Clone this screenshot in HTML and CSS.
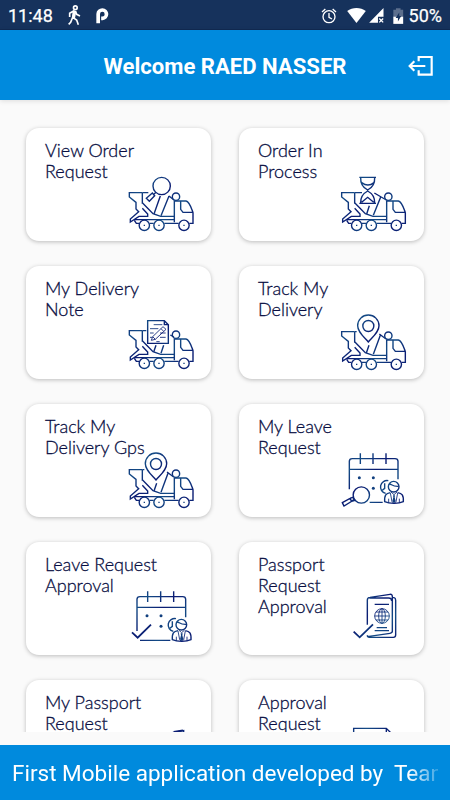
FILE: index.html
```html
<!DOCTYPE html>
<html lang="en">
<head>
    <meta charset="UTF-8">
    <meta name="viewport" content="width=device-width, initial-scale=1.0">
    <title>Welcome</title>
    <link rel="stylesheet" href="styles.css">
</head>
<body>
    <!-- Shared icon parts -->
    <svg class="defs" width="0" height="0">
        <defs>
            <linearGradient id="ink" gradientUnits="userSpaceOnUse" x1="340" y1="180" x2="380" y2="220" spreadMethod="reflect">
                <stop offset="0" stop-color="#0a1a72"/>
                <stop offset="1" stop-color="#134b85"/>
            </linearGradient>
            <g id="truck">
                <path d="M382 233V266M382 280L398 297V304H372L346 321V312L371 290L363 282V262L343 246V233H382M382 263L414 296L437 304H478"/>
                <path d="M478 322V258H513C524 260 529 280 534 293V325H523M497 259V283L504 292H533"/>
                <path d="M358 314H478M358 316L364 325H372M404 325H416M448 325H491"/>
                <circle cx="483" cy="245" r="11"/>
                <circle cx="388" cy="331" r="15.5"/>
                <circle cx="432" cy="331" r="15.5"/>
                <circle cx="507" cy="331" r="15.5"/>
                <path class="dot" d="M386 329h4v4h-4zM430 329h4v4h-4zM505 329h4v4h-4z"/>
            </g>
            <g id="pin">
                <path d="M423 264C407 246 391 233 391 215A32 32 0 0 1 455 215C455 233 439 246 423 264Z"/>
                <circle cx="423" cy="216" r="16.5"/>
                <path d="M425 274L417 297M459 244L438 301M456 240L476 255M382 233H388"/>
            </g>
            <g id="person">
                <path d="M481 269A19 19 0 1 0 473 307M470 277V292L463 298"/>
                <circle cx="497" cy="287" r="16"/>
                <path d="M483 279C491 278 491 287 512 286M487 305C474 307 469 312 470 332C484 339 512 339 526 332C527 312 522 307 509 305"/>
                <path class="thin" d="M489 303L498 311L507 303M482 323V336M514 323V336M487 306L492 332L498 338L504 332L509 306"/>
                <path class="dot" d="M495 313h6l-1 6 3 12-5 6-5-6 3-12z"/>
            </g>
        </defs>
    </svg>

    <div class="status-bar">
        <span class="clock">11:48</span>
        <svg class="walk" viewBox="0 0 39 60">
            <circle cx="22" cy="5" r="5.5"/>
            <path d="M5 33V22L17 15L23 17L26 25L36 30M17 16L14 34L8 49L2 55M14 34L26 42L31 56"/>
            <path d="M18 17L22 19L19 34L15 34Z"/>
        </svg>
        <svg class="parking" viewBox="0 0 38 48">
            <path d="M6 46V18A12.500 12.500 0 1 1 19 31H15"/>
        </svg>
        <div class="status-icons">
            <svg class="alarm" viewBox="0 0 48 48">
                <circle cx="24" cy="26" r="18"/>
                <path d="M24 15V28L33 33M3 12L13 3M35 3L45 12"/>
            </svg>
            <svg class="wifi" viewBox="0 0 57 46">
                <path d="M0 9C16-3 41-3 57 9L28.500 46Z"/>
            </svg>
            <svg class="signal" viewBox="0 0 45 46">
                <path d="M44 0V27H27V45H0Z"/>
                <path class="cross" d="M31 32L43 44M43 32L31 44"/>
            </svg>
            <svg class="battery" viewBox="0 0 32 48">
                <path class="empty" d="M1 5H9V0H23V5H31V26H1Z"/>
                <path d="M1 26H31V48H1Z"/>
                <path class="bolt" d="M19 13L8 30H15V41L25 24H19Z"/>
            </svg>
            <span class="percent">50%</span>
        </div>
    </div>

    <div class="header">
        <h1>Welcome RAED NASSER</h1>
        <svg class="logout" viewBox="0 0 75 60">
            <path d="M32 16V3H71V56H32V43M52 30H6M19 16L5 30L19 44"/>
        </svg>
    </div>

    <div class="menu">
        <div class="card">
            <p>View Order<br>Request</p>
            <svg class="icon" viewBox="333 171 216 198">
                <use href="#truck"/>
                <path d="M382 233H400M436 243L417 297M462 243L438 302M462 243L477 255"/>
                <circle cx="440" cy="213" r="26"/>
                <path d="M423 232L415 239M412 234L394 250L403 259L419 242Z"/>
            </svg>
        </div>
        <div class="card">
            <p>Order In<br>Process</p>
            <svg class="icon" viewBox="335 171 216 198">
                <use href="#truck"/>
                <path d="M382 233H404M426 272L418 297M461 244L438 301M441 234L477 255"/>
                <path d="M396 187H446M396 265H446M400 188C399 208 408 218 421 225C434 218 443 208 442 188M400 264C399 244 408 235 421 228C434 235 443 244 442 264M403 203C415 212 429 212 440 203M403 262L421 247L439 262"/>
            </svg>
        </div>
        <div class="card">
            <p>My Delivery<br>Note</p>
            <svg class="icon" viewBox="333 171 216 198">
                <use href="#truck"/>
                <path d="M382 233H394M423 277L416 297M446 277L438 301M466 246L477 252"/>
                <path d="M398 203H448L460 215V271H398ZM448 203V215H460"/>
                <path class="thin" d="M416 215H442M405 227H430M405 240H416M405 253H411M435 253H452M435 240H452M424 266H434M444 221L453 229L421 259L409 262L413 251ZM438 227L446 235M413 251L421 259"/>
            </svg>
        </div>
        <div class="card">
            <p>Track My<br>Delivery</p>
            <svg class="icon" viewBox="335 168 216 198">
                <use href="#truck"/>
                <use href="#pin"/>
            </svg>
        </div>
        <div class="card">
            <p>Track My<br>Delivery Gps</p>
            <svg class="icon" viewBox="333 168 216 198">
                <use href="#truck"/>
                <use href="#pin"/>
            </svg>
        </div>
        <div class="card">
            <p>My Leave<br>Request</p>
            <svg class="icon" viewBox="333 171 216 198">
                <path d="M364 295V211Q364 203 373 203H501Q510 203 510 211V265M364 235H510M425 334H464"/>
                <path d="M397 187V219M435 187V219M474 187V219"/>
                <circle class="dot" cx="394" cy="260" r="4.5"/>
                <circle class="dot" cx="436" cy="260" r="4.5"/>
                <circle class="dot" cx="436" cy="292" r="4.5"/>
                <circle cx="400" cy="312" r="24.500"/>
                <path d="M379 325L370 331M343 335L366 322L371 331L348 345ZM366 322L374 319L381 328L371 331"/>
                <use href="#person"/>
            </svg>
        </div>
        <div class="card">
            <p>Leave Request<br>Approval</p>
            <svg class="icon" viewBox="331 171 216 198">
                <path d="M364 306V211Q364 203 373 203H501Q510 203 510 211V265M364 235H510M373 334H464"/>
                <path d="M396 187V219M435 187V219M474 187V219"/>
                <circle class="dot" cx="394" cy="260" r="4.5"/>
                <circle class="dot" cx="436" cy="260" r="4.5"/>
                <circle class="dot" cx="436" cy="292" r="4.5"/>
                <path class="thick" d="M349 310L366 326L406 287"/>
                <use href="#person"/>
            </svg>
        </div>
        <div class="card">
            <p>Passport<br>Request<br>Approval</p>
            <svg class="icon" viewBox="333 171 216 198">
                <path d="M418 287V213Q418 206 426 205L486 196Q493 195 493 203V307Q493 312 486 313L418 323M424 207H482Q491 207 491 216M493 206H498Q503 207 503 214V318Q503 325 496 325H424Q418 325 418 319"/>
                <path d="M440 226H483M440 305H483M446 296H477"/>
                <circle class="thin" cx="462" cy="261" r="22"/>
                <ellipse class="thin" cx="462" cy="261" rx="10" ry="22"/>
                <path class="thin" d="M462 239V283M440 261H484M444 249H480M444 273H480"/>
                <path class="thick" d="M377 308L395 325L435 286"/>
            </svg>
        </div>
        <div class="card">
            <p>My Passport<br>Request</p>
            <svg class="icon" viewBox="335 171 216 198">
                <path class="thick" d="M478 195L506 190"/>
                <path d="M440 203V322H508V191L440 203"/>
            </svg>
        </div>
        <div class="card">
            <p>Approval<br>Request</p>
            <svg class="icon" viewBox="333 171 216 198">
                <path d="M377 330V184H475L503 212V330ZM475 184V212H503"/>
            </svg>
        </div>
    </div>

    <div class="footer">
        <div class="marquee">First Mobile application developed by&nbsp; Team</div>
    </div>
</body>
</html>
```
FILE: styles.css
```css
* {
    box-sizing: border-box;
}

body {
    font-family: Roboto, "Liberation Sans", sans-serif;
    background-color: #fafafa;
    margin: 0;
    height: 800px;
    display: flex;
    flex-direction: column;
    overflow: hidden;
}

svg {
    flex-shrink: 0;
    overflow: visible;
}

/* only holds definitions, kept out of the column */
.defs {
    position: absolute;
}

.status-bar {
    height: 30px;
    flex-shrink: 0;
    background: #16325c;
    border-bottom: 1px solid #112a52;
    color: #fff;
    display: flex;
    align-items: center;
    padding: 2px 8px 0;
    font-size: 18px;
    font-weight: 400;
    -webkit-text-stroke: 0.25px #fff;
}

.status-bar svg {
    fill: #fff;
}

.clock {
    width: 60px;
}

.status-bar .walk {
    width: 13px;
    height: 20px;
    stroke: #fff;
    stroke-width: 5;
    fill: none;
}

.status-bar .parking {
    width: 13px;
    height: 16px;
    margin-left: 15px;
    fill: none;
    stroke: #fff;
    stroke-width: 11;
}

.status-icons {
    margin-left: auto;
    display: flex;
    align-items: center;
}

.status-bar .alarm {
    width: 16px;
    height: 16px;
    fill: none;
    stroke: #fff;
    stroke-width: 4;
    margin-right: 10px;
}

.wifi {
    width: 19px;
    height: 15px;
    margin-right: 3px;
}

.signal {
    width: 15px;
    height: 15px;
    margin-right: 9px;
}

.cross {
    stroke: #fff;
    stroke-width: 4;
}

.battery {
    width: 10.5px;
    height: 16px;
    margin-right: 5px;
}

.status-bar .empty {
    fill: #5c6f8d;
}

.status-bar .bolt {
    fill: #16325c;
}

.header {
    height: 70px;
    flex-shrink: 0;
    background: #008add;
    color: #fff;
    display: grid;
    grid-template-columns: 1fr auto 1fr;
    align-items: center;
    padding: 1px 17px 0;
    box-shadow: 0 1px 5px rgba(0, 0, 0, 0.12);
}

.header h1 {
    grid-column: 2;
    margin: 0;
    font-size: 22.1px;
    font-weight: 700;
    line-height: 28px;
    white-space: nowrap;
}

.logout {
    width: 25px;
    height: 20px;
    justify-self: end;
    fill: none;
    stroke: #fff;
    stroke-width: 6.5;
}

.menu {
    height: 632px;
    flex-shrink: 0;
    overflow: hidden;
    display: grid;
    grid-template-columns: 185px 185px;
    grid-auto-rows: 113px;
    gap: 25px 28px;
    padding: 28px 26px 0;
}

.card {
    background: #fff;
    border-radius: 13px;
    box-shadow: 0 1px 4px rgba(0, 0, 0, 0.25);
    display: grid;
    padding: 12px 13px 3px 19px;
}

/* text and icon share one cell, long labels may run over the icon */
.card p,
.card .icon {
    grid-area: 1 / 1;
}

.card p {
    margin: 0;
    font-family: Lato, "Liberation Sans", sans-serif;
    font-size: 18px;
    font-weight: 300;
    line-height: 21px;
    color: #080e42;
    -webkit-text-stroke: 0.3px #080e42;
}

.icon {
    width: 72px;
    height: 66px;
    align-self: end;
    justify-self: end;
    fill: none;
    stroke: url(#ink);
    stroke-width: 4.2;
}

.thin {
    stroke-width: 2.6;
}

.thick {
    stroke-width: 5.5;
}

.dot {
    fill: #12407f;
    stroke: none;
}

.footer {
    flex: 1;
    margin-top: 12.5px;
    background: #008add;
    padding: 0 12px;
}

.marquee {
    height: 56px;
    overflow: hidden;
    color: #fff;
    font-size: 22.5px;
    line-height: 57px;
    white-space: nowrap;
    -webkit-mask-image: linear-gradient(to right, #000 93%, transparent 102%);
    mask-image: linear-gradient(to right, #000 93%, transparent 102%);
}
```
